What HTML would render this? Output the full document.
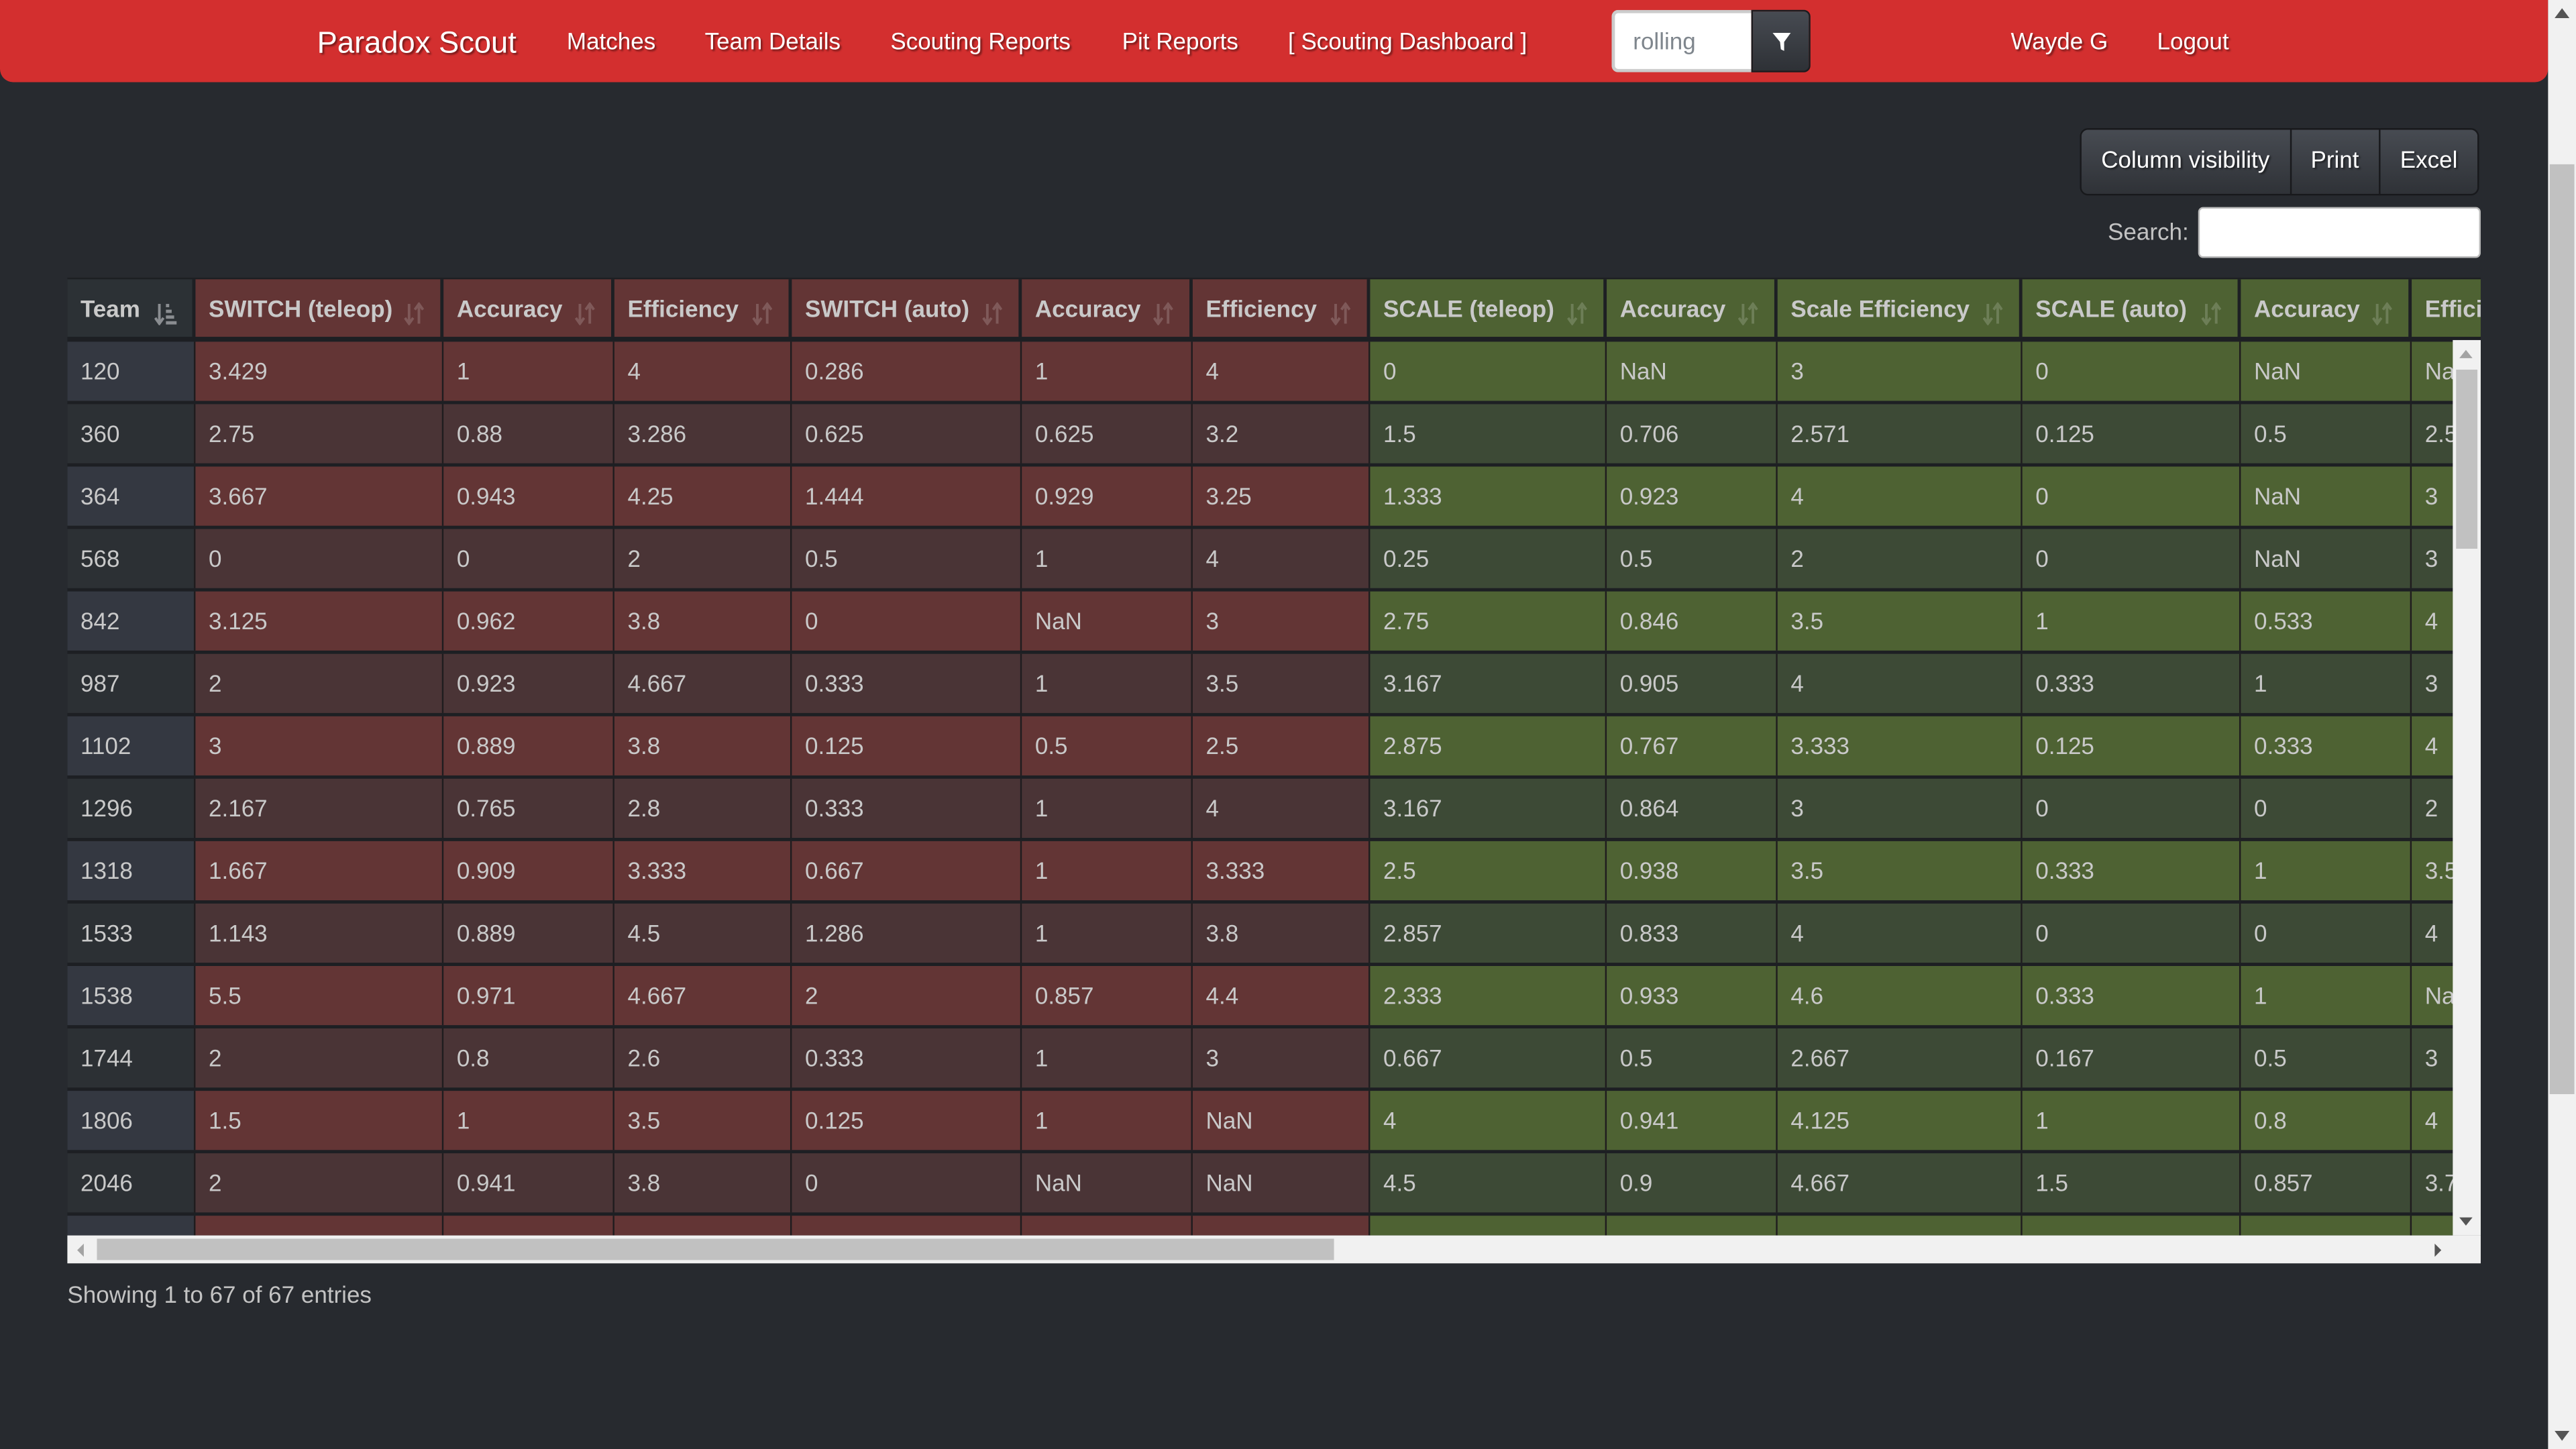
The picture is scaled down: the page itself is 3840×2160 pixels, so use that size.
<!DOCTYPE html>
<html><head><meta charset="utf-8">
<style>
html,body{margin:0;padding:0;width:3840px;height:2160px;overflow:hidden;background:#272a2f;}
#w{position:absolute;left:0;top:0;width:1568px;height:882px;transform:scale(2.44898);transform-origin:0 0;font-family:"Liberation Sans",Arial,sans-serif;color:#c9c9c9;background:#272a2f;}
.nav{position:absolute;left:0;top:0;width:1551px;height:50px;background:#d32f2f;border-radius:0 0 8px 8px;}
.nav a{position:absolute;top:0;line-height:52px;color:#fff;font-size:14.3px;text-shadow:1px 1px 1px rgba(0,0,0,.45);text-decoration:none;white-space:nowrap}
.nav .brand{font-size:18.5px;line-height:51px}
.inp{position:absolute;left:981px;top:6px;width:85px;height:38px;box-sizing:border-box;background:#fff;border:2px solid #ccc;border-right:none;border-radius:4px 0 0 4px;color:#7f868d;font-size:14.3px;line-height:36px;padding-left:11px}
.fbtn{position:absolute;left:1066px;top:6px;width:36px;height:38px;box-sizing:border-box;background:linear-gradient(#474b52,#2e3136);border:1px solid #1b1c1f;border-radius:0 4px 4px 0}
.sb{position:absolute;left:1551px;top:0;width:17px;height:882px;background:#f1f1f1}
.sbt{position:absolute;left:1552px;top:100px;width:15px;height:566px;background:#c1c1c1}
.btns{position:absolute;left:1266px;top:78px;height:39px;display:flex;border:1px solid #18191c;border-radius:5px;overflow:hidden}
.btns div{background:linear-gradient(#474b52,#2f3237);color:#fff;font-size:14.3px;line-height:39px;padding:0 12px;border-right:1px solid #18191c;text-shadow:1px 1px 1px rgba(0,0,0,.5)}
.btns div:last-child{border-right:none}
.slabel{position:absolute;left:1283px;top:134px;font-size:14.3px;color:#c3c3c3}
.sinp{position:absolute;left:1338px;top:126px;width:172px;height:31px;box-sizing:border-box;background:#fff;border:1px solid #bbb;border-radius:3px}
.tw{position:absolute;left:41px;top:169px;width:1469px;height:583px;overflow:hidden;background:#1d1f23}
.row{position:absolute;left:0;display:flex;height:36px;}
.c{box-sizing:border-box;height:36px;line-height:39px;padding-left:8px;font-size:14.3px;white-space:nowrap;overflow:hidden;border-right:1px solid #1f1c1e;flex:none;position:relative}
.h .c{font-weight:bold;border-right:2px solid #1d1f23;line-height:39px}
.ic{position:absolute;top:13px}
.vs{position:absolute;left:1493px;top:207px;width:17px;height:545px;background:#f1f1f1}
.vst{position:absolute;left:1495px;top:225px;width:13px;height:109px;background:#c1c1c1}
.hs{position:absolute;left:41px;top:752px;width:1469px;height:17px;background:#f1f1f1}
.hst{position:absolute;left:59px;top:754px;width:753px;height:13px;background:#c1c1c1}
.info{position:absolute;left:41px;top:781px;font-size:14.3px;color:#c3c3c3}
</style></head><body><div id="w">
<div class="nav">
<a class="brand" style="left:193px">Paradox Scout</a>
<a style="left:345px">Matches</a>
<a style="left:429px">Team Details</a>
<a style="left:542px">Scouting Reports</a>
<a style="left:683px">Pit Reports</a>
<a style="left:784px">[ Scouting Dashboard ]</a>
<a style="left:1224px">Wayde G</a>
<a style="left:1313px">Logout</a>
</div>
<div class="inp">rolling</div>
<div class="fbtn"><svg width="34" height="36" viewBox="0 0 34 36"><path d="M12 13 L23 13 L19 18.5 L19 24 L17 23 L16.5 18.5 Z" fill="#fff"/></svg></div>
<div class="sb"></div><div class="sbt"></div>
<svg style="position:absolute;left:1554px;top:4px" width="11" height="8"><path d="M1 7 L5.5 1 L10 7Z" fill="#555"/></svg>
<svg style="position:absolute;left:1554px;top:870px" width="11" height="8"><path d="M1 1 L5.5 7 L10 1Z" fill="#555"/></svg>
<div class="btns"><div>Column visibility</div><div>Print</div><div>Excel</div></div>
<div class="slabel">Search:</div><div class="sinp"></div>
<div class="tw" id="tw"></div>
<div class="vs"></div><div class="vst"></div>
<svg style="position:absolute;left:1496px;top:212px" width="10" height="7"><path d="M1 6 L5 1 L9 6Z" fill="#a3a3a3"/></svg>
<svg style="position:absolute;left:1496px;top:740px" width="10" height="7"><path d="M1 1 L5 6 L9 1Z" fill="#555"/></svg>
<div class="hs"></div><div class="hst"></div>
<svg style="position:absolute;left:46px;top:756px" width="6" height="10"><path d="M5 1 L1 5 L5 9Z" fill="#a3a3a3"/></svg>
<svg style="position:absolute;left:1481px;top:756px" width="6" height="10"><path d="M1 1 L5 5 L1 9Z" fill="#555"/></svg>
<div class="info">Showing 1 to 67 of 67 entries</div>
</div>
<script>
var W=[78,151,104,108,140,104,108,144,104,149,133,104,120];
var H=["Team","SWITCH (teleop)","Accuracy","Efficiency","SWITCH (auto)","Accuracy","Efficiency","SCALE (teleop)","Accuracy","Scale Efficiency","SCALE (auto)","Accuracy","Efficiency"];
var D=[
["120","3.429","1","4","0.286","1","4","0","NaN","3","0","NaN","NaN"],
["360","2.75","0.88","3.286","0.625","0.625","3.2","1.5","0.706","2.571","0.125","0.5","2.5"],
["364","3.667","0.943","4.25","1.444","0.929","3.25","1.333","0.923","4","0","NaN","3"],
["568","0","0","2","0.5","1","4","0.25","0.5","2","0","NaN","3"],
["842","3.125","0.962","3.8","0","NaN","3","2.75","0.846","3.5","1","0.533","4"],
["987","2","0.923","4.667","0.333","1","3.5","3.167","0.905","4","0.333","1","3"],
["1102","3","0.889","3.8","0.125","0.5","2.5","2.875","0.767","3.333","0.125","0.333","4"],
["1296","2.167","0.765","2.8","0.333","1","4","3.167","0.864","3","0","0","2"],
["1318","1.667","0.909","3.333","0.667","1","3.333","2.5","0.938","3.5","0.333","1","3.5"],
["1533","1.143","0.889","4.5","1.286","1","3.8","2.857","0.833","4","0","0","4"],
["1538","5.5","0.971","4.667","2","0.857","4.4","2.333","0.933","4.6","0.333","1","NaN"],
["1744","2","0.8","2.6","0.333","1","3","0.667","0.5","2.667","0.167","0.5","3"],
["1806","1.5","1","3.5","0.125","1","NaN","4","0.941","4.125","1","0.8","4"],
["2046","2","0.941","3.8","0","NaN","NaN","4.5","0.9","4.667","1.5","0.857","3.75"],
["2056","","","","","","","","","","","",""]];
function col(i,odd,h){if(i==0)return h?"#2c3135":(odd?"#343841":"#2c3034");if(i<7)return (h||odd)?"#633535":"#4a3436";return (h||odd)?"#4e6233":"#3d4a36";}
var sortI='<svg class="ic" width="12" height="14" viewBox="0 0 12 14"><path d="M3 1 V12 M0.5 9.5 L3 13 L5.5 9.5" stroke="rgba(255,255,255,.18)" stroke-width="1.6" fill="none"/><path d="M9 13 V2 M6.5 4.5 L9 1 L11.5 4.5" stroke="rgba(255,255,255,.18)" stroke-width="1.6" fill="none"/></svg>';
var teamI='<svg class="ic" width="14" height="14" viewBox="0 0 14 14"><path d="M3 1 V12 M0.5 9.5 L3 13 L5.5 9.5" stroke="#8a8d91" stroke-width="1.6" fill="none"/><rect x="7" y="1" width="2" height="2" fill="#8a8d91"/><rect x="7" y="4.5" width="3.5" height="2" fill="#8a8d91"/><rect x="7" y="8" width="5" height="2" fill="#8a8d91"/><rect x="7" y="11.5" width="6.5" height="2" fill="#8a8d91"/></svg>';
var tw=document.getElementById('tw'),s='';
s+='<div class="row h" style="top:1px;height:35px">';
for(var i=0;i<W.length;i++){s+='<div class="c" style="width:'+W[i]+'px;height:35px;background:'+col(i,1,1)+'">'+H[i]+'<span style="position:absolute;left:'+(W[i]-(i==0?25:24))+'px;top:1px">'+(i==0?teamI:sortI)+'</span></div>';}
s+='</div>';
for(var r=0;r<D.length;r++){s+='<div class="row" style="top:'+(39+r*38)+'px">';for(var i=0;i<W.length;i++){s+='<div class="c" style="width:'+W[i]+'px;background:'+col(i,r%2==0,0)+'">'+D[r][i]+'</div>';}s+='</div>';}
tw.innerHTML=s;
</script>
</body></html>
